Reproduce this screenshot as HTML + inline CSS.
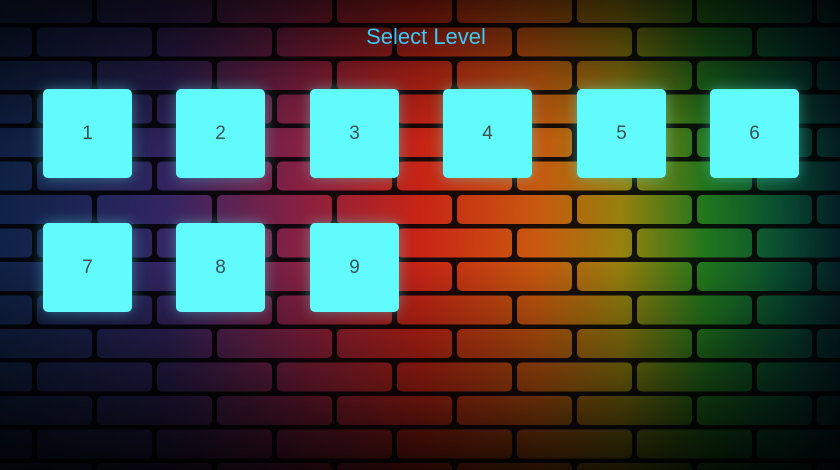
<!DOCTYPE html>
<html><head><meta charset="utf-8"><style>
body{margin:0;width:840px;height:470px;overflow:hidden;background:#0a0a12;font-family:"Liberation Sans",sans-serif;position:relative}
svg.bg{position:absolute;left:0;top:0}
.title{position:absolute;left:0;width:852px;top:24px;text-align:center;color:#3ac8f8;font-size:22px}
.t{position:absolute;width:89px;height:89px;background:#62fbfd;border-radius:5px;box-shadow:0 0 14px rgba(98,251,253,.4);display:flex;align-items:center;justify-content:center;color:#3a5252;font-size:19px}
</style></head><body>
<svg class="bg" width="840" height="470">
<defs>
<linearGradient id="g" x1="0" x2="1" y1="0" y2="0">
<stop offset="0" stop-color="#1a3a78"/>
<stop offset="0.2" stop-color="#3a2a70"/>
<stop offset="0.36" stop-color="#9a2448"/>
<stop offset="0.5" stop-color="#e02818"/>
<stop offset="0.64" stop-color="#e06410"/>
<stop offset="0.74" stop-color="#a89010"/>
<stop offset="0.84" stop-color="#248420"/>
<stop offset="0.93" stop-color="#0a5a3a"/>
<stop offset="1" stop-color="#062a32"/>
</linearGradient>
<linearGradient id="v" x1="0" x2="0" y1="0" y2="1">
<stop offset="0" stop-color="#000" stop-opacity=".6"/>
<stop offset="0.3" stop-color="#000" stop-opacity=".12"/>
<stop offset="0.55" stop-color="#000" stop-opacity=".1"/>
<stop offset="1" stop-color="#000" stop-opacity=".8"/>
</linearGradient>
<radialGradient id="r" cx="0.55" cy="0.5" r="0.7">
<stop offset="0.5" stop-color="#000" stop-opacity="0"/>
<stop offset="1" stop-color="#000" stop-opacity=".6"/>
</radialGradient>
<pattern id="p" width="120" height="67" patternUnits="userSpaceOnUse" patternTransform="translate(95,59)">
<rect x="2" y="2" width="115" height="29" rx="5" fill="#fff"/>
<rect x="62" y="35.5" width="115" height="29" rx="5" fill="#fff"/>
<rect x="-58" y="35.5" width="115" height="29" rx="5" fill="#fff"/>
</pattern>
<mask id="m"><rect width="840" height="470" fill="url(#p)"/></mask>
</defs>
<rect width="840" height="470" fill="url(#g)" opacity=".3"/>
<rect width="840" height="470" fill="#000" opacity=".6"/>
<rect width="840" height="470" fill="url(#g)" mask="url(#m)"/>
<rect width="840" height="470" fill="url(#v)"/>
<rect width="840" height="470" fill="url(#r)"/>
</svg>
<div class="title">Select Level</div>
<div class="t" style="left:43px;top:89px">1</div>
<div class="t" style="left:176px;top:89px">2</div>
<div class="t" style="left:310px;top:89px">3</div>
<div class="t" style="left:443px;top:89px">4</div>
<div class="t" style="left:577px;top:89px">5</div>
<div class="t" style="left:710px;top:89px">6</div>
<div class="t" style="left:43px;top:223px">7</div>
<div class="t" style="left:176px;top:223px">8</div>
<div class="t" style="left:310px;top:223px">9</div>
</body></html>
